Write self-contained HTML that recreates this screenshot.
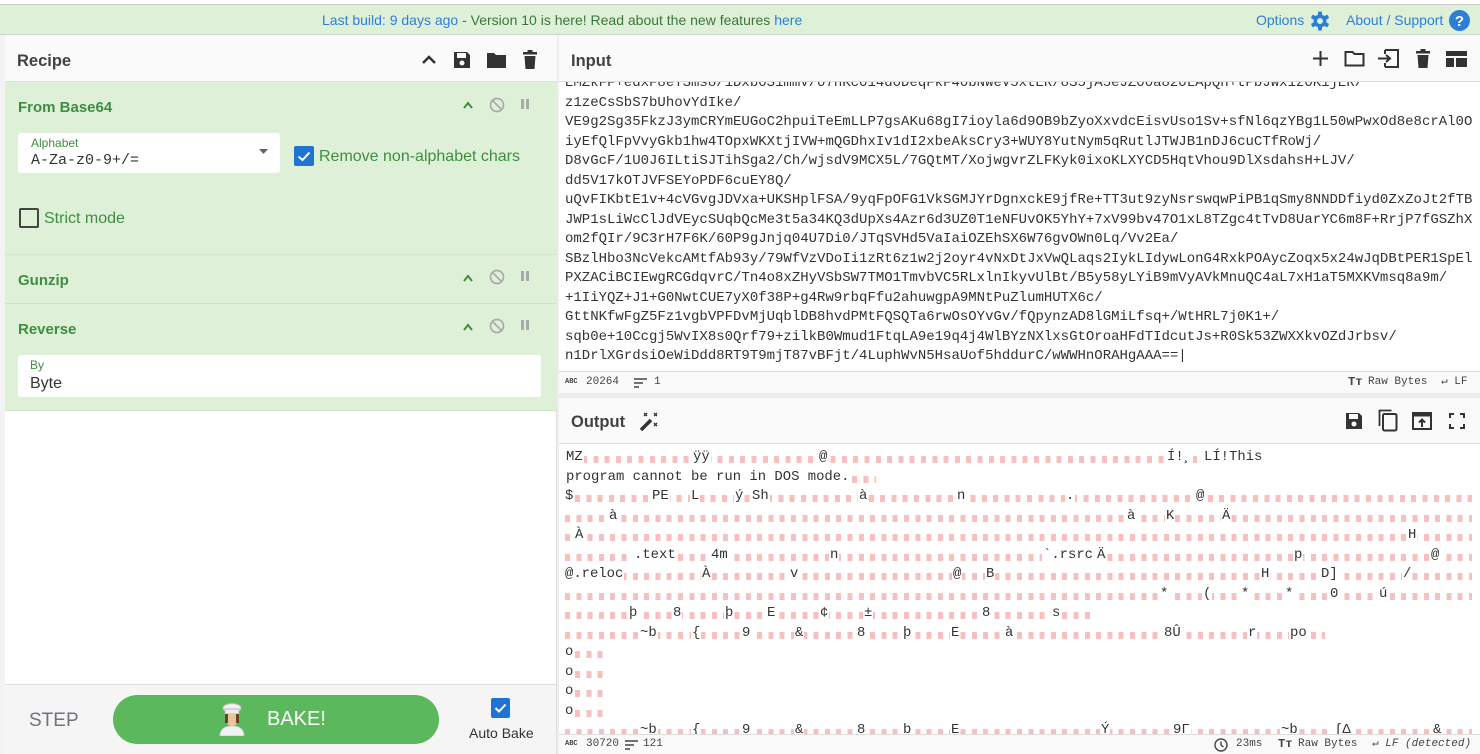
<!DOCTYPE html>
<html><head><meta charset="utf-8"><style>
*{box-sizing:border-box;margin:0;padding:0}
body{width:1480px;height:754px;overflow:hidden;background:#fff;font-family:"Liberation Sans",sans-serif;position:relative;color:#424242}
.a{position:absolute}
#banner{left:0;top:4px;width:1480px;height:31px;background:#dff0d8;border-top:1px solid #ccc;border-bottom:1px solid #d0d0d0;font-size:14px;line-height:30px}
.blue{color:#2c7fd6}
.grn{color:#3c763d}
.hdr{background:#fafafa;border-bottom:1px solid #ddd}
.ttl{font-weight:bold;font-size:16.5px;color:#424242}
.op{background:#dff0d8;border-bottom:1px solid #cfe6c5}
.opt{font-weight:bold;font-size:15px;color:#3e8e41}
.mono{font-family:"Liberation Mono",monospace}
.inp div{height:19.5px;line-height:19.5px;white-space:pre;font-size:14px;color:#333}
.red{position:absolute;height:7px;background:repeating-linear-gradient(90deg,#f7c0c0 0 5px,transparent 5px 11.3px)}
.ol{position:absolute;left:0;width:1480px;height:19.5px}
.ol span{position:absolute;top:0;background:#fff;font-family:"Liberation Mono",monospace;font-size:13.9px;line-height:19.5px;color:#333;white-space:pre;padding:0 1px}
.sb{font-family:"Liberation Mono",monospace;font-size:11px;color:#444}
</style></head><body>

<div id="banner" class="a">
 <div class="a" style="left:322px;top:0"><span class="blue">Last build: 9 days ago</span><span class="grn"> - Version 10 is here! Read about the new features </span><span class="blue">here</span></div>
 <div class="a blue" style="left:1256px;top:0">Options</div>
 <svg class="a" style="left:1310px;top:6px" width="20" height="20" viewBox="0 0 20 20"><g fill="#2c7fd6"><circle cx="10" cy="10" r="6.5"/><rect x="8" y="0.5" width="4" height="19" rx="1"/><rect x="8" y="0.5" width="4" height="19" rx="1" transform="rotate(60 10 10)"/><rect x="8" y="0.5" width="4" height="19" rx="1" transform="rotate(120 10 10)"/></g><circle cx="10" cy="10" r="3" fill="#dff0d8"/></svg>
 <div class="a blue" style="left:1346px;top:0">About / Support</div>
 <svg class="a" style="left:1449px;top:5px" width="21" height="21"><circle cx="10.5" cy="10.5" r="10.5" fill="#2c7fd6"/><text x="10.5" y="16" text-anchor="middle" font-family="Liberation Sans" font-weight="bold" font-size="15" fill="#fff">?</text></svg>
</div>

<!-- Recipe -->
<div class="a" style="left:0;top:35px;width:5px;height:719px;background:#f3f3f3"></div>
<div class="a hdr" style="left:5px;top:35px;width:552px;height:47px"><div class="a ttl" style="left:12px;top:17px">Recipe</div>
 <svg class="a" style="left:416px;top:18px" width="16" height="12"><path d="M2 10 L8 4 L14 10" stroke="#333" stroke-width="2.5" fill="none"/></svg>
 <svg class="a" style="left:448px;top:16px" width="18" height="18"><path d="M1 1h13l3 3v13H1z" fill="#333"/><rect x="4" y="2" width="9" height="5" fill="#fafafa"/><circle cx="9" cy="12" r="2.5" fill="#fafafa"/></svg>
 <svg class="a" style="left:481px;top:16px" width="21" height="18"><path d="M1 2h7l2 2h10v13H1z" fill="#333"/></svg>
 <svg class="a" style="left:517px;top:15px" width="16" height="20"><rect x="1" y="2" width="14" height="2.5" fill="#333"/><rect x="5.5" y="0" width="5" height="3" fill="#333"/><path d="M2.5 6h11l-1 13h-9z" fill="#333"/></svg>
</div>
<div class="a" style="left:5px;top:82px;width:552px;height:602px;background:#fff;border-right:1px solid #ddd"></div>

<div class="a op" style="left:5px;top:82px;width:552px;height:173px">
 <div class="a opt" style="left:13px;top:17px">From Base64</div>
 <svg class="a" style="left:457px;top:18px" width="12" height="10"><path d="M2 8 L6 3 L10 8" stroke="#3e8e41" stroke-width="2" fill="none"/></svg>
 <svg class="a" style="left:484px;top:15px" width="16" height="16"><circle cx="8" cy="8" r="6.5" stroke="#aaa" stroke-width="1.7" fill="none"/><path d="M3.5 3.5 L12.5 12.5" stroke="#aaa" stroke-width="1.7"/></svg>
 <svg class="a" style="left:515px;top:16px" width="10" height="12"><rect x="1" y="1" width="3" height="10" fill="#aaa"/><rect x="6" y="1" width="3" height="10" fill="#aaa"/></svg>
 <div class="a" style="left:13px;top:51px;width:262px;height:40px;background:#fff;border-radius:3px">
  <div class="a" style="left:13px;top:3px;font-size:12px;color:#3e8e41">Alphabet</div>
  <div class="a mono" style="left:13px;top:19px;font-size:15px;color:#333">A-Za-z0-9+/=</div>
  <svg class="a" style="left:241px;top:16px" width="10" height="6"><path d="M0 0h9l-4.5 5z" fill="#666"/></svg>
 </div>
 <div class="a" style="left:289px;top:64px;width:20px;height:20px;background:#1e73d3;border-radius:2px"><svg width="20" height="20"><path d="M4.5 10.5 L8.5 14 L15.5 6.5" stroke="#fff" stroke-width="2" fill="none"/></svg></div>
 <div class="a" style="left:314px;top:66px;font-size:16px;color:#3e8e41">Remove non-alphabet chars</div>
 <div class="a" style="left:14px;top:126px;width:20px;height:20px;border:2px solid #444;border-radius:2px"></div>
 <div class="a" style="left:39px;top:128px;font-size:16px;color:#3e8e41">Strict mode</div>
</div>
<div class="a op" style="left:5px;top:255px;width:552px;height:49px">
 <div class="a opt" style="left:13px;top:17px">Gunzip</div>
 <svg class="a" style="left:457px;top:18px" width="12" height="10"><path d="M2 8 L6 3 L10 8" stroke="#3e8e41" stroke-width="2" fill="none"/></svg>
 <svg class="a" style="left:484px;top:14px" width="16" height="16"><circle cx="8" cy="8" r="6.5" stroke="#aaa" stroke-width="1.7" fill="none"/><path d="M3.5 3.5 L12.5 12.5" stroke="#aaa" stroke-width="1.7"/></svg>
 <svg class="a" style="left:515px;top:15px" width="10" height="12"><rect x="1" y="1" width="3" height="10" fill="#aaa"/><rect x="6" y="1" width="3" height="10" fill="#aaa"/></svg>
</div>
<div class="a op" style="left:5px;top:304px;width:552px;height:107px">
 <div class="a opt" style="left:13px;top:17px">Reverse</div>
 <svg class="a" style="left:457px;top:18px" width="12" height="10"><path d="M2 8 L6 3 L10 8" stroke="#3e8e41" stroke-width="2" fill="none"/></svg>
 <svg class="a" style="left:484px;top:14px" width="16" height="16"><circle cx="8" cy="8" r="6.5" stroke="#aaa" stroke-width="1.7" fill="none"/><path d="M3.5 3.5 L12.5 12.5" stroke="#aaa" stroke-width="1.7"/></svg>
 <svg class="a" style="left:515px;top:15px" width="10" height="12"><rect x="1" y="1" width="3" height="10" fill="#aaa"/><rect x="6" y="1" width="3" height="10" fill="#aaa"/></svg>
 <div class="a" style="left:13px;top:51px;width:523px;height:42px;background:#fff;border-radius:3px">
  <div class="a" style="left:12px;top:3px;font-size:12px;color:#3e8e41">By</div>
  <div class="a" style="left:12px;top:20px;font-size:16px;color:#333">Byte</div>
 </div>
</div>

<div class="a" style="left:5px;top:684px;width:552px;height:70px;background:#f5f5f5;border-top:1px solid #ddd;border-right:1px solid #ddd">
 <div class="a" style="left:24px;top:25px;font-size:19px;color:#6c757d">STEP</div>
 <div class="a" style="left:108px;top:10px;width:326px;height:49px;border-radius:25px;background:#5cb85c">
  <svg class="a" style="left:106px;top:8px" width="26" height="33" viewBox="0 0 26 33"><ellipse cx="13" cy="5" rx="9" ry="4.5" fill="#f2f2f2" stroke="#bbb"/><rect x="6" y="6" width="14" height="5" fill="#eee" stroke="#bbb"/><path d="M7 11h12v5c0 5-3 7-6 7s-6-2-6-7z" fill="#e8c49a"/><path d="M6 11h3v9H6zM17 11h3v9h-3z" fill="#6b4226"/><path d="M1 33c0-7 5-10 12-10s12 3 12 10z" fill="#f2f2f2" stroke="#ccc"/></svg>
  <div class="a" style="left:154px;top:13px;font-size:20px;color:#fff">BAKE!</div>
 </div>
 <div class="a" style="left:486px;top:13px;width:19px;height:20px;background:#1e73d3;border-radius:2px"><svg width="19" height="20"><path d="M4.5 10 L8 13.5 L14.5 6.5" stroke="#fff" stroke-width="2" fill="none"/></svg></div>
 <div class="a" style="left:464px;top:40px;font-size:14px;color:#333">Auto Bake</div>
</div>

<!-- Input -->
<div class="a" style="left:557px;top:35px;width:2px;height:719px;background:#eee"></div>
<div class="a hdr" style="left:559px;top:35px;width:921px;height:47px">
 <div class="a ttl" style="left:12px;top:17px">Input</div>
 <svg class="a" style="left:753px;top:15px" width="17" height="17"><path d="M8.5 1v15M1 8.5h15" stroke="#333" stroke-width="2"/></svg>
 <svg class="a" style="left:785px;top:15px" width="21" height="17"><path d="M1.5 2h7l2 2h9v11.5h-18z" stroke="#333" stroke-width="2" fill="none"/></svg>
 <svg class="a" style="left:818px;top:14px" width="22" height="19"><path d="M8 1h13v17H8M8 1v4M8 14v4" stroke="#333" stroke-width="2" fill="none"/><path d="M1 9.5h11M9 6l4 3.5-4 3.5" stroke="#333" stroke-width="2" fill="none"/></svg>
 <svg class="a" style="left:856px;top:14px" width="16" height="20"><rect x="1" y="2" width="14" height="2.5" fill="#333"/><rect x="5.5" y="0" width="5" height="3" fill="#333"/><path d="M2.5 6h11l-1 13h-9z" fill="#333"/></svg>
 <svg class="a" style="left:887px;top:16px" width="21" height="16"><rect x="0" y="0" width="21" height="5" fill="#333"/><rect x="0" y="7" width="8" height="9" fill="#333"/><rect x="10" y="7" width="11" height="9" fill="#333"/></svg>
</div>
<div class="a inp mono" style="left:565px;top:82px;width:915px;height:289px;overflow:hidden">
 <div style="margin-top:-8px">EMZkFF+edxF8eTSms8/1Dxb0S1mmV/07hKc014d0DeqFkF40bNWeV5xtER/8S5jA5eJZ00a820LApQh+tPbJWx1z0K1jER/</div>
<div>z1zeCsSbS7bUhovYdIke/</div>
<div>VE9g2Sg35FkzJ3ymCRYmEUGoC2hpuiTeEmLLP7gsAKu68gI7ioyla6d9OB9bZyoXxvdcEisvUso1Sv+sfNl6qzYBg1L50wPwxOd8e8crAl0O</div>
<div>iyEfQlFpVvyGkb1hw4TOpxWKXtjIVW+mQGDhxIv1dI2xbeAksCry3+WUY8YutNym5qRutlJTWJB1nDJ6cuCTfRoWj/</div>
<div>D8vGcF/1U0J6ILtiSJTihSga2/Ch/wjsdV9MCX5L/7GQtMT/XojwgvrZLFKyk0ixoKLXYCD5HqtVhou9DlXsdahsH+LJV/</div>
<div>dd5V17kOTJVFSEYoPDF6cuEY8Q/</div>
<div>uQvFIKbtE1v+4cVGvgJDVxa+UKSHplFSA/9yqFpOFG1VkSGMJYrDgnxckE9jfRe+TT3ut9zyNsrswqwPiPB1qSmy8NNDDfiyd0ZxZoJt2fTB</div>
<div>JWP1sLiWcClJdVEycSUqbQcMe3t5a34KQ3dUpXs4Azr6d3UZ0T1eNFUvOK5YhY+7xV99bv47O1xL8TZgc4tTvD8UarYC6m8F+RrjP7fGSZhX</div>
<div>om2fQIr/9C3rH7F6K/60P9gJnjq04U7Di0/JTqSVHd5VaIaiOZEhSX6W76gvOWn0Lq/Vv2Ea/</div>
<div>SBzlHbo3NcVekcAMtfAb93y/79WfVzVDoIi1zRt6z1w2j2oyr4vNxDtJxVwQLaqs2IykLIdywLonG4RxkPOAycZoqx5x24wJqDBtPER1SpEl</div>
<div>PXZACiBCIEwgRCGdqvrC/Tn4o8xZHyVSbSW7TMO1TmvbVC5RLxlnIkyvUlBt/B5y58yLYiB9mVyAVkMnuQC4aL7xH1aT5MXKVmsq8a9m/</div>
<div>+1IiYQZ+J1+G0NwtCUE7yX0f38P+g4Rw9rbqFfu2ahuwgpA9MNtPuZlumHUTX6c/</div>
<div>GttNKfwFgZ5Fz1vgbVPFDvMjUqblDB8hvdPMtFQSQTa6rwOsOYvGv/fQpynzAD8lGMiLfsq+/WtHRL7j0K1+/</div>
<div>sqb0e+10Ccgj5WvIX8s0Qrf79+zilkB0Wmud1FtqLA9e19q4j4WlBYzNXlxsGtOroaHFdTIdcutJs+R0Sk53ZWXXkvOZdJrbsv/</div>
<div>n1DrlXGrdsiOeWiDdd8RT9T9mjT87vBFjt/4LuphWvN5HsaUof5hddurC/wWWHnORAHgAAA==|</div>
</div>
<div class="a sb" style="left:559px;top:371px;width:921px;height:22px;background:#fafafa;border-top:1px solid #ddd;line-height:21px">
 <span class="a" style="left:6px;font-size:7px;font-weight:bold">ABC</span><span class="a" style="left:27px">20264</span>
 <svg class="a" style="left:75px;top:6px" width="13" height="10"><path d="M0 1h13M0 5h9M0 9h5" stroke="#444" stroke-width="1.5"/></svg><span class="a" style="left:95px">1</span>
 <span class="a" style="left:789px;font-weight:bold;font-size:12px">Tт</span><span class="a" style="left:809px">Raw Bytes</span>
 <span class="a" style="left:882px">↵ LF</span>
</div>
<div class="a" style="left:559px;top:393px;width:921px;height:5px;background:#ececec"></div>

<!-- Output -->
<div class="a hdr" style="left:559px;top:398px;width:921px;height:46px">
 <div class="a ttl" style="left:12px;top:15px">Output</div>
 <svg class="a" style="left:79px;top:12px" width="22" height="22"><path d="M3 20 L13 10" stroke="#333" stroke-width="3.5"/><path d="M6 3l3 3M9 3l-3 3M16 3l3 3M19 3l-3 3M16 13l3 3M19 13l-3 3" stroke="#333" stroke-width="1.3"/></svg>
 <svg class="a" style="left:786px;top:14px" width="18" height="18"><path d="M1 1h13l3 3v13H1z" fill="#333"/><rect x="4" y="2" width="9" height="5" fill="#fafafa"/><circle cx="9" cy="12" r="2.5" fill="#fafafa"/></svg>
 <svg class="a" style="left:819px;top:11px" width="20" height="23"><path d="M1.5 17V1.5h12" stroke="#333" stroke-width="1.8" fill="none"/><rect x="5" y="5" width="13.5" height="16.5" rx="1.5" stroke="#333" stroke-width="2" fill="none"/></svg>
 <svg class="a" style="left:853px;top:14px" width="20" height="18"><rect x="1" y="1" width="18" height="16" stroke="#333" stroke-width="2" fill="none"/><rect x="1" y="1" width="18" height="3.5" fill="#333"/><path d="M10 15V8M7 10.5l3-3 3 3" stroke="#333" stroke-width="2" fill="none"/></svg>
 <svg class="a" style="left:890px;top:15px" width="16" height="16"><path d="M1 5V1h4M11 1h4v4M15 11v4h-4M5 15H1v-4" stroke="#333" stroke-width="2" fill="none"/></svg>
</div>
<div class="a" style="left:0;top:447px;width:1480px;height:287px;overflow:hidden">
 <div class="a" style="left:565px;top:3px;width:1px;height:17px;background:#333"></div>
 <div class="ol" style="top:1px"><div class="red" style="left:582px;width:618px;top:8px"></div><span style="left:565px">MZ</span><span style="left:692px">ÿÿ</span><span style="left:818px">@</span><span style="left:1166px">Í!¸</span><span style="left:1203px">LÍ!This</span></div>
 <div class="ol" style="top:20.5px"><div class="red" style="left:852px;width:24px;top:8px"></div><span style="left:565px">program cannot be run in DOS mode.</span></div>
 <div class="ol" style="top:40px"><div class="red" style="left:575px;width:897px;top:8px"></div><span style="left:564px">$</span><span style="left:651px">PE</span><span style="left:690px">L</span><span style="left:734px">ý</span><span style="left:751px">Sh</span><span style="left:858px">à</span><span style="left:956px">n</span><span style="left:1065px">.</span><span style="left:1195px">@</span></div>
 <div class="ol" style="top:59.5px"><div class="red" style="left:565px;width:907px;top:8px"></div><span style="left:608px">à</span><span style="left:1126px">à</span><span style="left:1165px">K</span><span style="left:1221px">Ä</span></div>
 <div class="ol" style="top:79px"><div class="red" style="left:565px;width:907px;top:8px"></div><span style="left:574px">À</span><span style="left:1407px">H</span></div>
 <div class="ol" style="top:98.5px"><div class="red" style="left:565px;width:907px;top:8px"></div><span style="left:633px">.text</span><span style="left:710px">4m</span><span style="left:829px">n</span><span style="left:1042px">`.rsrc</span><span style="left:1096px">Ä</span><span style="left:1293px">p</span><span style="left:1430px">@</span></div>
 <div class="ol" style="top:118px"><div class="red" style="left:565px;width:907px;top:8px"></div><span style="left:564px">@.reloc</span><span style="left:701px">À</span><span style="left:789px">v</span><span style="left:952px">@</span><span style="left:985px">B</span><span style="left:1260px">H</span><span style="left:1320px">D]</span><span style="left:1402px">/</span></div>
 <div class="ol" style="top:137.5px"><div class="red" style="left:565px;width:907px;top:8px"></div><span style="left:1159px">*</span><span style="left:1202px">(</span><span style="left:1240px">*</span><span style="left:1284px">*</span><span style="left:1329px">0</span><span style="left:1378px">ú</span></div>
 <div class="ol" style="top:157px"><div class="red" style="left:565px;width:530px;top:8px"></div><span style="left:628px">þ</span><span style="left:672px">8</span><span style="left:724px">þ</span><span style="left:766px">E</span><span style="left:819px">¢</span><span style="left:863px">±</span><span style="left:981px">8</span><span style="left:1051px">s</span></div>
 <div class="ol" style="top:176.5px"><div class="red" style="left:565px;width:760px;top:8px"></div><span style="left:639px">~b</span><span style="left:691px">{</span><span style="left:741px">9</span><span style="left:794px">&amp;</span><span style="left:856px">8</span><span style="left:902px">þ</span><span style="left:950px">E</span><span style="left:1004px">à</span><span style="left:1163px">8Û</span><span style="left:1247px">r</span><span style="left:1289px">po</span></div>
 <div class="ol" style="top:196px"><div class="red" style="left:575px;width:32px;top:8px"></div><span style="left:564px">o</span></div>
 <div class="ol" style="top:215.5px"><div class="red" style="left:575px;width:30px;top:8px"></div><span style="left:564px">o</span></div>
 <div class="ol" style="top:235px"><div class="red" style="left:575px;width:30px;top:8px"></div><span style="left:564px">o</span></div>
 <div class="ol" style="top:254.5px"><div class="red" style="left:575px;width:30px;top:8px"></div><span style="left:564px">o</span></div>
 <div class="ol" style="top:274px"><div class="red" style="left:565px;width:907px;top:8px"></div><span style="left:639px">~b</span><span style="left:691px">{</span><span style="left:741px">9</span><span style="left:794px">&amp;</span><span style="left:856px">8</span><span style="left:902px">b</span><span style="left:950px">E</span><span style="left:1100px">Ý</span><span style="left:1172px">9Γ</span><span style="left:1280px">~b</span><span style="left:1333px">ʃΔ</span><span style="left:1432px">&amp;</span></div>
</div>
<div class="a sb" style="left:559px;top:734px;width:921px;height:20px;background:#fafafa;border-top:1px solid #ddd;line-height:19px">
 <span class="a" style="left:6px;font-size:7px;font-weight:bold">ABC</span><span class="a" style="left:27px">30720</span>
 <svg class="a" style="left:66px;top:5px" width="13" height="10"><path d="M0 1h13M0 5h9M0 9h5" stroke="#444" stroke-width="1.5"/></svg><span class="a" style="left:84px">121</span>
 <svg class="a" style="left:655px;top:3px" width="14" height="14"><circle cx="7" cy="7" r="6" stroke="#444" stroke-width="1.4" fill="none"/><path d="M7 3.5V7l2.5 2" stroke="#444" stroke-width="1.4" fill="none"/></svg><span class="a" style="left:677px">23ms</span>
 <span class="a" style="left:719px;font-weight:bold;font-size:12px">Tт</span><span class="a" style="left:739px">Raw Bytes</span>
 <span class="a" style="left:813px">↵ <i>LF (detected)</i></span>
</div>
</body></html>
